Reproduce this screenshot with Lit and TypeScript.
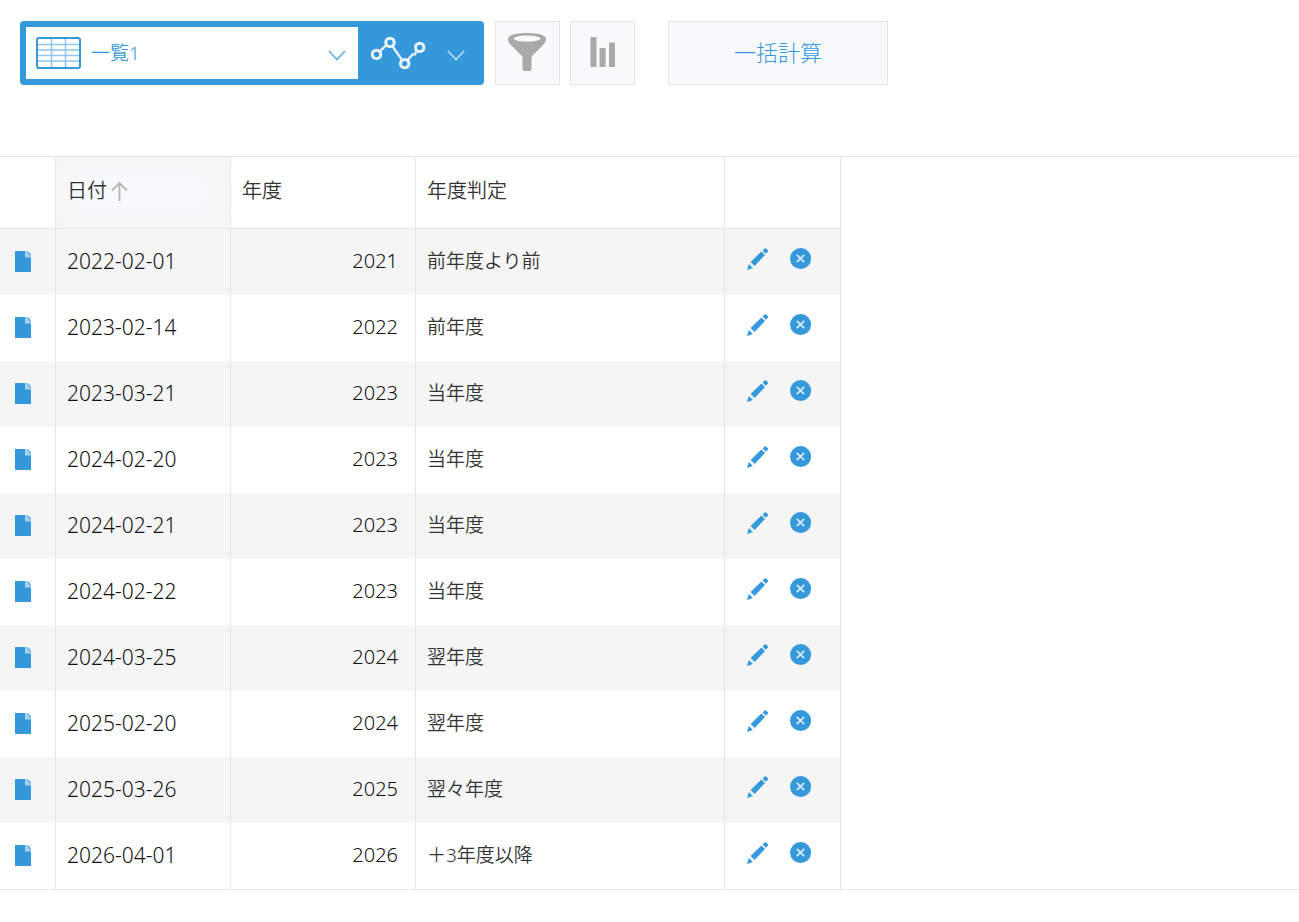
import { LitElement, html, css } from "lit";
import { customElement, property, state } from "lit/decorators.js";

interface Entry {
  date: string;
  year: string;
  label: string;
}

const ENTRIES: Entry[] = [
  { date: "2022-02-01", year: "2021", label: "前年度より前" },
  { date: "2023-02-14", year: "2022", label: "前年度" },
  { date: "2023-03-21", year: "2023", label: "当年度" },
  { date: "2024-02-20", year: "2023", label: "当年度" },
  { date: "2024-02-21", year: "2023", label: "当年度" },
  { date: "2024-02-22", year: "2023", label: "当年度" },
  { date: "2024-03-25", year: "2024", label: "翌年度" },
  { date: "2025-02-20", year: "2024", label: "翌年度" },
  { date: "2025-03-26", year: "2025", label: "翌々年度" },
  { date: "2026-04-01", year: "2026", label: "＋3年度以降" },
];

const chevron = html`<svg class="chevron" width="18" height="12" viewBox="0 0 18 12" aria-hidden="true">
  <path d="M1 1 L9 9.6 L17 1" fill="none" stroke="currentColor" stroke-width="1.5" />
</svg>`;

@customElement("view-toolbar")
export class ViewToolbar extends LitElement {
  static styles = css`
    :host {
      display: block;
    }
    .bar {
      display: flex;
      flex-wrap: wrap;
      align-items: stretch;
      padding: 21px 20px;
    }
    .views {
      display: flex;
      box-sizing: border-box;
      width: 464px;
      height: 64px;
      padding: 6px 0 6px 6px;
      border-radius: 4px;
      background: #3498db;
    }
    .picker {
      display: grid;
      grid-template-columns: 55px 1fr 30px;
      align-items: center;
      flex: 1;
      padding-left: 10px;
      background: #fff;
      color: #3498db;
    }
    .picker svg {
      grid-row: 1;
      pointer-events: none;
    }
    .picker .sheet {
      grid-column: 1;
    }
    .picker .chevron {
      grid-column: 3;
      padding-top: 6px;
      color: #5dade2;
      z-index: 1;
    }
    .select {
      grid-row: 1;
      grid-column: 2 / 4;
      align-self: stretch;
      appearance: none;
      padding: 0;
      border: 0;
      background: transparent;
      color: #3498db;
      font: 350 19px "Noto Sans", "Noto Sans CJK JP", sans-serif;
      cursor: pointer;
    }
    .graph {
      display: flex;
      align-items: center;
      justify-content: space-between;
      width: 126px;
      padding: 0 19px 0 12px;
      border: 0;
      background: transparent;
      color: #c2dff4;
      cursor: pointer;
    }
    .graph .chevron {
      padding-top: 6px;
    }
    .tool {
      display: flex;
      align-items: center;
      justify-content: center;
      box-sizing: border-box;
      width: 65px;
      height: 64px;
      margin-left: 10px;
      padding: 0 0 2px;
      border: 1px solid #e3e7e8;
      background: #f7f9fa;
      cursor: pointer;
    }
    .views + .tool {
      margin-left: 11px;
    }
    .calc {
      width: 220px;
      margin-left: 33px;
      padding-bottom: 4px;
      color: #3498db;
      font: 300 22px "Noto Sans CJK JP", sans-serif;
    }
  `;

  render() {
    return html`
      <div class="bar">
        <div class="views">
          <div class="picker">
            <svg class="sheet" width="45" height="32" viewBox="0 0 45 32" aria-hidden="true">
              <rect x="1" y="1" width="43" height="30" rx="2" fill="#fff" />
              <path d="M2 7.5h41M2 13h41M2 18.5h41M2 24h41M15.5 2v28M29.5 2v28"
                stroke="#8fc5ea" stroke-width="1.5" fill="none" />
              <rect x="1" y="1" width="43" height="30" rx="2" fill="none" stroke="#3498db" stroke-width="2" />
            </svg>
            <select class="select" aria-label="一覧">
              <option>一覧1</option>
            </select>
            ${chevron}
          </div>
          <button class="graph" type="button" aria-label="グラフ">
            <svg width="56" height="34" viewBox="0 0 56 34" aria-hidden="true">
              <g fill="none" stroke="#e8f3fb" stroke-width="3">
                <path d="M10 15 L16.2 9.4 M22.3 10 L31.8 23.6 M37.6 24 L42.6 18.4 H45 L46.5 15" stroke-width="2.4" />
                <circle cx="6.5" cy="18.4" r="4.2" />
                <circle cx="20" cy="6.4" r="4.2" />
                <circle cx="34.7" cy="27.6" r="4.2" />
                <circle cx="49.7" cy="11.4" r="4.2" />
              </g>
            </svg>
            ${chevron}
          </button>
        </div>
        <button class="tool" type="button" aria-label="絞り込み">
          <svg width="39" height="38" viewBox="0 0 39 38" aria-hidden="true">
            <path d="M0 6 C0 2 8 0 19 0 C30 0 38 2 38 6 C38 8 37 10 35 12 L24.5 22.5 Q23.5 23.5 23.5 25 V36 Q23.5 38 21.5 38 H16.5 Q14.5 38 14.5 36 V25 Q14.5 23.5 13.5 22.5 L3 12 C1 10 0 8 0 6 Z" fill="#a9a9a9" />
            <ellipse cx="19" cy="5.6" rx="13.4" ry="3" fill="#f7f9fa" />
          </svg>
        </button>
        <button class="tool" type="button" aria-label="グラフを作成">
          <svg width="25" height="30" viewBox="0 0 25 30" aria-hidden="true">
            <path d="M.5 0h6v30h-6zM9.6 11h6v19h-6zM19 5.4h6V30h-6z" fill="#a9a9a9" />
          </svg>
        </button>
        <button class="tool calc" type="button">一括計算</button>
      </div>
    `;
  }
}

@customElement("record-table")
export class RecordTable extends LitElement {
  @property({ attribute: false }) entries: Entry[] = [];

  static styles = css`
    :host {
      display: block;
      border-top: 1px solid #e3e7e8;
      border-bottom: 1px solid #e3e7e8;
    }
    .table {
      border-collapse: separate;
      border-spacing: 0;
      border-right: 1px solid #e3e5e6;
      color: #333;
      font: 350 19px "Noto Sans", "Noto Sans CJK JP", sans-serif;
    }
    .head,
    .cell {
      box-sizing: border-box;
      padding: 0 17px 2px 11px;
      border-left: 1px solid #e3e7e8;
      text-align: left;
      line-height: 28px;
      white-space: nowrap;
    }
    .head {
      height: 72px;
      padding-bottom: 4px;
      border-bottom: 1px solid #e3e7e8;
      font-size: 20px;
      font-weight: 350;
    }
    .cell {
      height: 66px;
    }
    .head:first-child,
    .cell:first-child {
      border-left: 0;
    }
    .row:nth-child(odd) {
      background: #f5f5f5;
    }
    .open {
      width: 55px;
      padding: 0 0 2px 15px;
    }
    .date {
      width: 175px;
    }
    .year {
      width: 185px;
    }
    .row .date {
      color: #111;
      font-size: 21px;
    }
    .number {
      color: #111;
      font-size: 20px;
      text-align: right;
    }
    .judge {
      width: 309px;
    }
    .tools {
      width: 116px;
    }
    .sorted {
      background: #f7f9fa;
      box-shadow: inset 0 0 30px #f2f4f3;
    }
    .sort {
      display: flex;
      align-items: center;
      gap: 4px;
      padding: 0;
      border: 0;
      background: transparent;
      color: inherit;
      font: inherit;
      cursor: pointer;
    }
    .sort svg {
      padding-top: 2px;
    }
    .actions {
      display: flex;
      gap: 21px;
      padding: 0 0 4px 11px;
    }
    .icon {
      display: block;
      padding: 0;
      border: 0;
      background: transparent;
      cursor: pointer;
    }
    .icon svg,
    .link svg {
      display: block;
    }
    .link {
      display: block;
      width: 16px;
    }
  `;

  private row(e: Entry) {
    return html`
      <tr class="row">
        <td class="cell open">
          <a class="link" href="#${e.date}" aria-label="レコードの詳細を表示">
            <svg width="16" height="21" viewBox="0 0 16 21" aria-hidden="true">
              <path d="M0 0h10l6 6v15H0z" fill="#3498db" />
              <path d="M10 0h1.5L16 4.5V6.5h-6z" fill="#a6d1f0" />
              <path d="M11.5 0H12Q16 1.5 16 5V6z" fill="#5dade2" />
            </svg>
          </a>
        </td>
        <td class="cell date">${e.date}</td>
        <td class="cell year number">${e.year}</td>
        <td class="cell judge">${e.label}</td>
        <td class="cell tools">
          <div class="actions">
            <button class="icon" type="button" aria-label="編集">
              <svg width="22" height="22" viewBox="0 0 22 22" aria-hidden="true">
                <g fill="#3498db">
                  <path d="M15.6 2.6 L17.6 0.6 Q18.4 0 19.2 0.6 L20.8 2.2 Q21.4 3 20.8 3.8 L18.8 5.8 Z" />
                  <path d="M14.4 3.4 L18 7 L7.6 18 L3.6 14 Z" />
                  <path d="M1.8 16 L6 20 L0 22 Z" />
                </g>
              </svg>
            </button>
            <button class="icon" type="button" aria-label="削除">
              <svg width="22" height="22" viewBox="0 0 22 22" aria-hidden="true">
                <circle cx="10.6" cy="10.6" r="10.5" fill="#3498db" />
                <path d="M6.8 6.8 L14.2 14.2 M14.2 6.8 L6.8 14.2" stroke="#d6eaf8" stroke-width="1.8" />
              </svg>
            </button>
          </div>
        </td>
      </tr>
    `;
  }

  render() {
    return html`
      <table class="table">
        <thead>
          <tr>
            <th class="head open"></th>
            <th class="head date sorted" scope="col" aria-sort="ascending">
              <button class="sort" type="button">
                日付
                <svg width="17" height="19" viewBox="0 0 17 19" aria-hidden="true">
                  <path d="M8.5 19V1M1 8.5L8.5 1L16 8.5" fill="none" stroke="#b4b4b4" stroke-width="1.8" />
                </svg>
              </button>
            </th>
            <th class="head year" scope="col">年度</th>
            <th class="head judge" scope="col">年度判定</th>
            <th class="head tools"></th>
          </tr>
        </thead>
        <tbody>
          ${this.entries.map((e) => this.row(e))}
        </tbody>
      </table>
    `;
  }
}

@customElement("app-root")
export class AppRoot extends LitElement {
  @state() private entries = ENTRIES;

  static styles = css`
    :host {
      display: flex;
      flex-direction: column;
      gap: 50px;
      min-height: 100vh;
      background: #fff;
    }
  `;

  render() {
    return html`
      <view-toolbar></view-toolbar>
      <record-table .entries=${this.entries}></record-table>
    `;
  }
}
